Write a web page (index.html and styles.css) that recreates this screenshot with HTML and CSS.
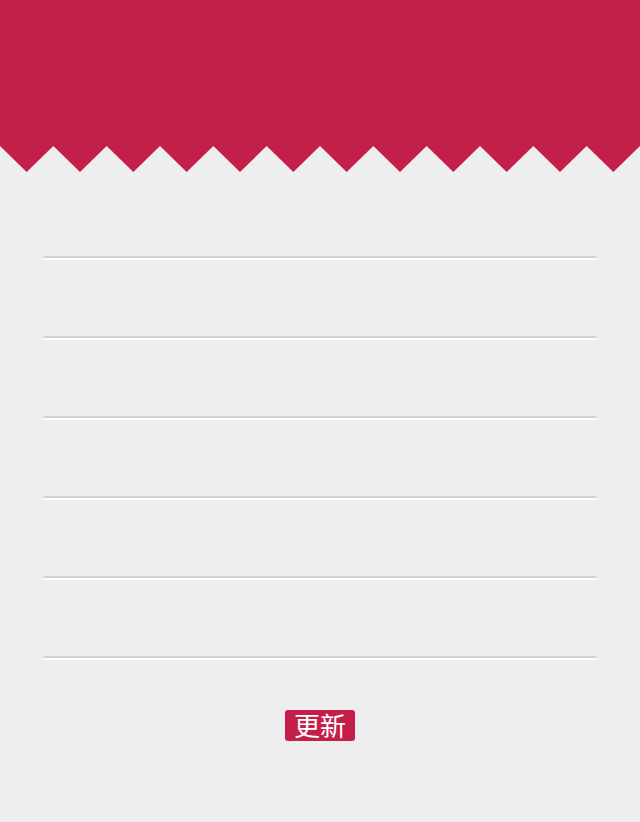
FILE: index.html
```html
<!DOCTYPE html>
<html lang="zh">
<head>
<meta charset="utf-8">
<link rel="stylesheet" href="styles.css">
</head>
<body>
<header class="banner">
  <div class="banner-fill"></div>
  <svg class="zigzag" width="640" height="26" viewBox="0 0 640 26" preserveAspectRatio="none">
    <polygon fill="#c41f4a" points="0,0 640,0 640,0 613.33,26 586.67,0 560,26 533.33,0 506.67,26 480,0 453.33,26 426.67,0 400,26 373.33,0 346.67,26 320,0 293.33,26 266.67,0 240,26 213.33,0 186.67,26 160,0 133.33,26 106.67,0 80,26 53.33,0 26.67,26 0,0"/>
  </svg>
</header>
<main class="content">
  <ul class="lines">
    <li class="line"></li>
    <li class="line"></li>
    <li class="line"></li>
    <li class="line"></li>
    <li class="line"></li>
    <li class="line"></li>
  </ul>
  <div class="actions">
    <button class="update-btn" type="button">更新</button>
  </div>
</main>
</body>
</html>
```
FILE: styles.css
```css
html, body {
  margin: 0;
  padding: 0;
  background: #eeeeee;
  font-family: "Noto Sans CJK SC", "Noto Sans", sans-serif;
}

.banner {
  display: flex;
  flex-direction: column;
}

.banner-fill {
  height: 146px;
  background: #c41f4a;
}

.zigzag {
  display: block;
  width: 640px;
  height: 26px;
}

.content {
  padding: 8px 44px 0;
}

.lines {
  list-style: none;
  margin: 0;
  padding: 0;
  display: flex;
  flex-direction: column;
  gap: 2px;
}

.line {
  height: 76px;
  border-bottom: 2px solid #d3d3d3;
  box-shadow: 0 2px 0 #ffffff;
}

.actions {
  display: flex;
  justify-content: center;
  padding-top: 52px;
}

.update-btn {
  width: 70px;
  height: 31px;
  padding: 0 0 2px;
  border: none;
  border-radius: 3px;
  background: #c41f4a;
  color: #ffffff;
  font-family: "Noto Sans CJK SC", sans-serif;
  font-size: 26px;
  line-height: 29px;
  letter-spacing: 0;
}
```
